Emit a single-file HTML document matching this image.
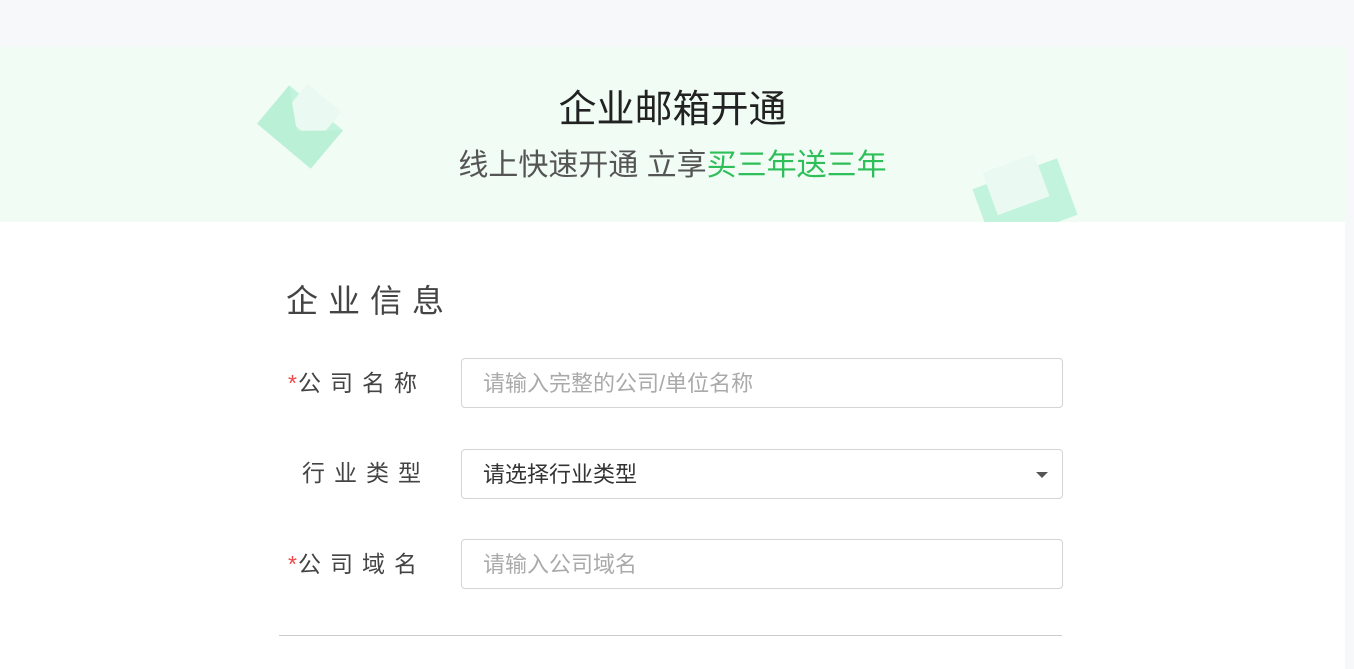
<!DOCTYPE html>
<html><head><meta charset="utf-8"><style>
body{margin:0;width:1354px;height:669px;overflow:hidden;background:#f7f8fa;font-family:"Liberation Sans","Noto Sans CJK SC",sans-serif;position:relative}
.banner{position:absolute;left:0;top:47px;width:1345px;height:175px;background:#f0fcf4;overflow:hidden}
.main{position:absolute;left:0;top:222px;width:1345px;height:447px;background:#fff}
.t1{position:absolute;top:86px;left:0;width:1345px;text-align:center;font-size:38px;color:#222;line-height:48px}
.t2{position:absolute;top:146px;left:0;width:1345px;text-align:center;font-size:30px;color:#555;line-height:40px}
.t2 span{color:#2fbf5a}
.h{position:absolute;left:286px;top:276px;font-size:32px;letter-spacing:10px;color:#444}
.lab{position:absolute;left:288px;font-size:23px;letter-spacing:9px;color:#444;line-height:30px}
.lab i{font-style:normal;color:#f04848;letter-spacing:1px}
.in{position:absolute;left:461px;width:602px;height:50px;border:1px solid #d4d4d4;border-radius:4px;box-sizing:border-box;font-size:22px;line-height:50px;padding-left:21px;color:#aaa;background:#fff}
.line{position:absolute;left:279px;top:635px;width:783px;height:1px;background:#ccc}
</style></head><body>
<div class="banner">
<svg style="position:absolute;left:250px;top:30px" width="100" height="100"><g transform="rotate(40 50 50)"><rect x="15" y="25" width="70" height="50" fill="#c2f3dc"/><rect x="28" y="12" width="44" height="40" fill="#eafaf2"/><polygon points="15,25 50,55 85,25 85,75 15,75" fill="#b9f0d6"/></g></svg>
<svg style="position:absolute;left:965px;top:105px" width="120" height="80"><g transform="rotate(-20 60 50)"><rect x="15" y="20" width="90" height="60" fill="#c2f3dc"/><rect x="30" y="8" width="55" height="45" fill="#eafaf2"/></g></svg>
</div>
<div class="t1">企业邮箱开通</div>
<div class="t2">线上快速开通 立享<span>买三年送三年</span></div>
<div class="main"></div>
<div class="h">企业信息</div>
<div class="lab" style="top:368px"><i>*</i>公司名称</div>
<div class="in" style="top:358px">请输入完整的公司/单位名称</div>
<div class="lab" style="top:458px;left:302px">行业类型</div>
<div class="in" style="top:449px;color:#333">请选择行业类型<span style="position:absolute;right:14px;top:22px;border:6px solid transparent;border-top:6px solid #555;border-bottom:0"></span></div>
<div class="lab" style="top:549px"><i>*</i>公司域名</div>
<div class="in" style="top:539px">请输入公司域名</div>
<div class="line"></div>
</body></html>
